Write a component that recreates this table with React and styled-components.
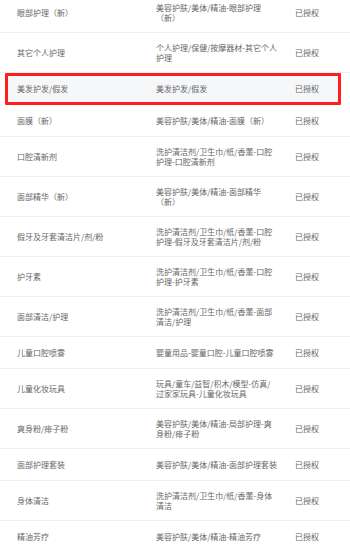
import styled, { createGlobalStyle } from 'styled-components';

// category path is kept in the same lines as the source table shows them
const rows = [
  { name: '眼部护理（新）', path: ['美容护肤/美体/精油-眼部护理', '（新）'] },
  { name: '其它个人护理', path: ['个人护理/保健/按摩器材-其它个人', '护理'] },
  { name: '美发护发/假发', path: ['美发护发/假发'], marked: true },
  { name: '面膜（新）', path: ['美容护肤/美体/精油-面膜（新）'] },
  { name: '口腔清新剂', path: ['洗护清洁剂/卫生巾/纸/香薰-口腔', '护理-口腔清新剂'] },
  { name: '面部精华（新）', path: ['美容护肤/美体/精油-面部精华', '（新）'] },
  { name: '假牙及牙套清洁片/剂/粉', path: ['洗护清洁剂/卫生巾/纸/香薰-口腔', '护理-假牙及牙套清洁片/剂/粉'] },
  { name: '护牙素', path: ['洗护清洁剂/卫生巾/纸/香薰-口腔', '护理-护牙素'] },
  { name: '面部清洁/护理', path: ['洗护清洁剂/卫生巾/纸/香薰-面部', '清洁/护理'] },
  { name: '儿童口腔喷雾', path: ['婴童用品-婴童口腔-儿童口腔喷雾'] },
  { name: '儿童化妆玩具', path: ['玩具/童车/益智/积木/模型-仿真/', '过家家玩具-儿童化妆玩具'] },
  { name: '爽身粉/痱子粉', path: ['美容护肤/美体/精油-局部护理-爽', '身粉/痱子粉'] },
  { name: '面部护理套装', path: ['美容护肤/美体/精油-面部护理套装'] },
  { name: '身体清洁', path: ['洗护清洁剂/卫生巾/纸/香薰-身体', '清洁'] },
  { name: '精油芳疗', path: ['美容护肤/美体/精油-精油芳疗'] },
];

const App = () => {
  return (
    <>
      <GlobalStyle />
      <Table>
        {rows.map((row) => (
          <Row key={row.name} $marked={row.marked}>
            <Cell>{row.name}</Cell>
            <Cell>
              {row.path.map((line) => (
                <Line key={line}>{line}</Line>
              ))}
            </Cell>
            <Cell>已授权</Cell>
          </Row>
        ))}
      </Table>
    </>
  );
};

const GlobalStyle = createGlobalStyle`
  html, body {
    margin: 0;
    padding: 0;
    background: #ffffff;
    overflow: hidden;
  }
  body {
    font-family: 'Noto Sans CJK SC', 'Noto Sans', sans-serif;
  }
`;

const Table = styled.div`
  width: 350px;
  margin-top: -7px;
`;

const Row = styled.div`
  position: relative;
  isolation: isolate;
  display: grid;
  grid-template-columns: 139px 139px 1fr;
  align-items: center;
  min-height: 32px;
  padding: 9.5px 0 9.5px 17px;
  box-sizing: border-box;
  border-bottom: 1px solid #efefef;

  ${({ $marked }) =>
    $marked &&
    `
    border-bottom-color: transparent;

    &::before {
      content: '';
      position: absolute;
      inset: 0 9px 0 5px;
      background: #f6f7f9;
      z-index: -1;
    }

    &::after {
      content: '';
      position: absolute;
      inset: 0 9px -1px 5px;
      border: 3px solid #ff1d1d;
      border-radius: 1px;
    }
  `}
`;

const Cell = styled.div`
  font-size: 8px;
  line-height: 10px;
  color: #666666;
  white-space: nowrap;
`;

const Line = styled.span`
  display: block;
`;

export default App;
